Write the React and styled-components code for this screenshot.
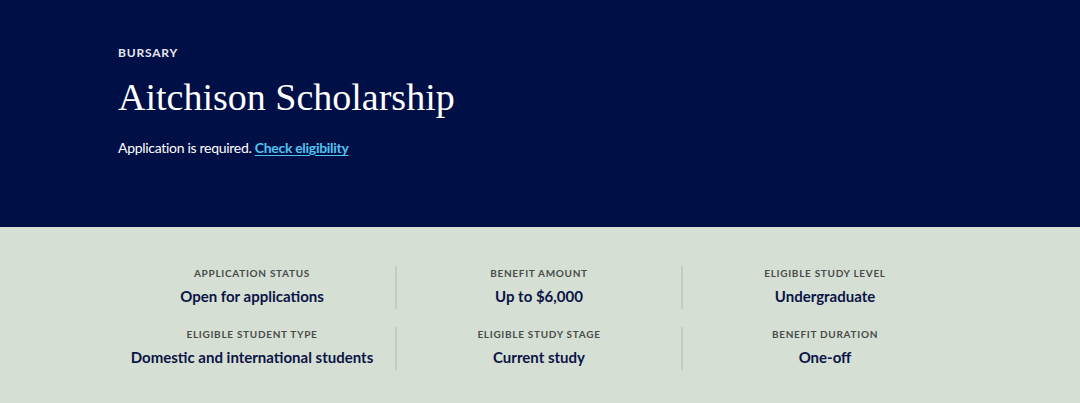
import React from "react";
import styled, { createGlobalStyle } from "styled-components";

const Global = createGlobalStyle`
  html, body { margin: 0; padding: 0; }
  body { background: #d5dfd3; font-family: Lato, "Noto Sans", sans-serif; }
`;

const Hero = styled.header`
  background: #000f46;
  height: 227px;
  box-sizing: border-box;
  padding: 46px 0 0 118px;
  color: #fff;
`;

const Eyebrow = styled.div`
  font-family: Lato, sans-serif;
  font-size: 12px;
  font-weight: 700;
  letter-spacing: 0.8px;
  line-height: 14px;
  color: #e6e8ef;
`;

const Title = styled.h1`
  margin: 15px 0 0;
  font-family: "Liberation Serif", serif;
  font-weight: 400;
  font-size: 38px;
  line-height: 44px;
  letter-spacing: 0;
  color: #fff;
`;

const Lead = styled.p`
  margin: 19px 0 0;
  font-family: Lato, sans-serif;
  font-size: 14px;
  letter-spacing: -0.3px;
  line-height: 20px;
  color: #fff;
`;

const Link = styled.a`
  color: #4fc3f0;
  font-weight: 700;
  text-decoration: underline;
  text-underline-offset: 2px;
`;

const Facts = styled.section`
  display: grid;
  grid-template-columns: repeat(3, 286px);
  row-gap: 18px;
  padding: 39px 0 36px 109px;
`;

const Fact = styled.div`
  display: flex;
  flex-direction: column;
  align-items: center;
  gap: 7px;
  height: 42px;
  border-left: ${(p) => (p.$first ? "none" : "2px solid #c3cdc2")};
  padding-top: 1px;
`;

const Label = styled.div`
  font-family: Lato, sans-serif;
  font-size: 10px;
  font-weight: 700;
  letter-spacing: 0.7px;
  text-transform: uppercase;
  color: #4b4b4b;
  line-height: 12px;
`;

const Value = styled.div`
  font-family: Lato, sans-serif;
  font-size: 15px;
  font-weight: 700;
  color: #0b1446;
  line-height: 20px;
`;

const facts = [
  ["Application status", "Open for applications"],
  ["Benefit amount", "Up to $6,000"],
  ["Eligible study level", "Undergraduate"],
  ["Eligible student type", "Domestic and international students"],
  ["Eligible study stage", "Current study"],
  ["Benefit duration", "One-off"],
];

export default function App() {
  return (
    <>
      <Global />
      <Hero>
        <Eyebrow>BURSARY</Eyebrow>
        <Title>Aitchison Scholarship</Title>
        <Lead>
          Application is required. <Link href="#">Check eligibility</Link>
        </Lead>
      </Hero>
      <Facts>
        {facts.map(([l, v], i) => (
          <Fact key={l} $first={i % 3 === 0}>
            <Label>{l}</Label>
            <Value>{v}</Value>
          </Fact>
        ))}
      </Facts>
    </>
  );
}
